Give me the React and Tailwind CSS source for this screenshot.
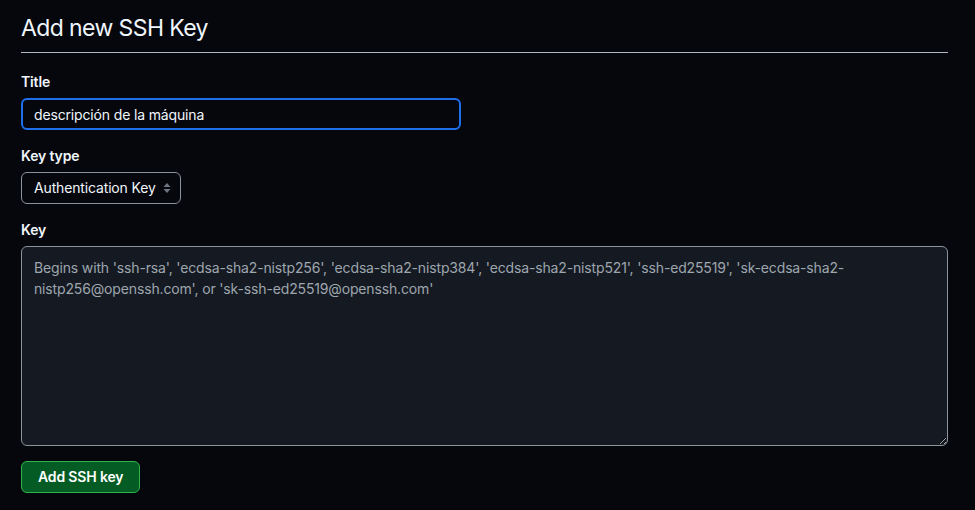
import React from 'react';

function SelectArrows() {
	return (
		<svg width="8" height="12" viewBox="0 0 8 12" className="text-[#6e7681]">
			<path d="M4 1 L7.5 5 L0.5 5 Z" fill="currentColor" />
			<path d="M4 11 L7.5 7 L0.5 7 Z" fill="currentColor" />
		</svg>
	);
}

export default function App() {
	const placeholder =
		"Begins with 'ssh-rsa', 'ecdsa-sha2-nistp256', 'ecdsa-sha2-nistp384', 'ecdsa-sha2-nistp521', 'ssh-ed25519', 'sk-ecdsa-sha2-nistp256@openssh.com', or 'sk-ssh-ed25519@openssh.com'";

	return (
		<div
			className="min-h-[510px] w-full bg-[#05070c] text-[#f0f6fc] px-[21px] pt-3 tracking-[-0.15px]"
			style={{ fontFamily: 'Inter, "Noto Sans", "Liberation Sans", sans-serif' }}
		>
			<div className="w-[927px]">
				{/* header */}
				<div className="pb-2 border-b border-[#b1b7bf]">
					<h2 className="text-[23px] leading-8 font-normal tracking-[-0.6px]">Add new SSH Key</h2>
				</div>

				<form className="flex flex-col pt-[19px]" onSubmit={(e) => e.preventDefault()}>
					<label className="text-sm leading-5 font-semibold">Title</label>
					<input
						type="text"
						defaultValue="descripción de la máquina"
						className="mt-1.5 w-[440px] h-8 rounded-md border-2 border-[#1f6feb] bg-[#05070c] px-[11px] text-sm tracking-[-0.15px] text-[#f0f6fc] outline-none"
					/>

					<label className="mt-4 text-sm leading-5 font-semibold">Key type</label>
					<div className="mt-1.5 relative w-40 h-8">
						<select
							defaultValue="auth"
							className="appearance-none w-full h-full rounded-md border border-[#8b939c] bg-[#05070c] pl-3 pr-5 text-sm tracking-[-0.15px] text-[#f0f6fc] outline-none"
						>
							<option value="auth">Authentication Key</option>
							<option value="sign">Signing Key</option>
						</select>
						<span className="absolute right-[10px] top-[10px] pointer-events-none">
							<SelectArrows />
						</span>
					</div>

					<label className="mt-4 text-sm leading-5 font-semibold">Key</label>
					<textarea
						placeholder={placeholder}
						className="mt-1.5 w-full h-[200px] rounded-md border border-[#8b939c] bg-[#151a22] px-3 py-[10px] text-sm leading-[21px] tracking-[-0.15px] text-[#f0f6fc] placeholder:text-[#9ea6ae] outline-none resize-y"
					/>

					<div className="mt-[15px]">
						<button
							type="submit"
							className="h-8 rounded-md border border-[#2fb34c] bg-[#045c24] px-4 text-sm font-semibold tracking-[-0.15px] text-white"
						>
							Add SSH key
						</button>
					</div>
				</form>
			</div>
		</div>
	);
}
